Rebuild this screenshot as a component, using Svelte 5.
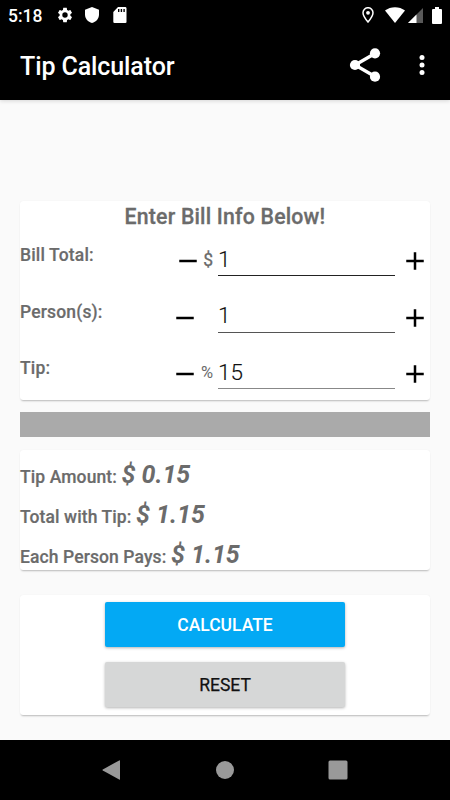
<script>
  let fields = $state([
    { key: 'bill', label: 'Bill Total:', symbol: '$', value: 1 },
    { key: 'persons', label: 'Person(s):', symbol: '', value: 1 },
    { key: 'tip', label: 'Tip:', symbol: '%', value: 15 }
  ]);

  let results = $state([
    { label: 'Tip Amount:', amount: 0.15 },
    { label: 'Total with Tip:', amount: 1.15 },
    { label: 'Each Person Pays:', amount: 1.15 }
  ]);

  function step(field, delta) {
    const min = field.key === 'persons' ? 1 : 0;
    field.value = Math.max(min, Number(field.value) + delta);
  }

  function calculate() {
    const [bill, persons, tip] = fields.map((field) => Number(field.value) || 0);
    const tipAmount = (bill * tip) / 100;
    results[0].amount = tipAmount;
    results[1].amount = bill + tipAmount;
    results[2].amount = (bill + tipAmount) / Math.max(1, persons);
  }

  function reset() {
    fields[0].value = 1;
    fields[1].value = 1;
    fields[2].value = 15;
    calculate();
  }
</script>

<div class="screen">
  <div class="status-bar">
    <span class="clock">5:18</span>
    <svg class="gear" viewBox="0 0 24 24" fill="currentColor">
      <path d="M19.14 12.94c.04-.3.06-.61.06-.94 0-.32-.02-.64-.07-.94l2.03-1.58c.18-.14.23-.41.12-.61l-1.92-3.32c-.12-.22-.37-.29-.59-.22l-2.39.96c-.5-.38-1.03-.7-1.62-.94l-.36-2.54c-.04-.24-.24-.41-.48-.41h-3.84c-.24 0-.43.17-.47.41l-.36 2.54c-.59.24-1.13.57-1.62.94l-2.39-.96c-.22-.08-.47 0-.59.22L2.74 8.87c-.12.21-.08.47.12.61l2.03 1.58c-.05.3-.09.63-.09.94s.02.64.07.94l-2.03 1.58c-.18.14-.23.41-.12.61l1.92 3.32c.12.22.37.29.59.22l2.39-.96c.5.38 1.03.7 1.62.94l.36 2.54c.05.24.24.41.48.41h3.84c.24 0 .44-.17.47-.41l.36-2.54c.59-.24 1.13-.56 1.62-.94l2.39.96c.22.08.47 0 .59-.22l1.92-3.32c.12-.22.07-.47-.12-.61l-2.01-1.58zM12 15.6A3.6 3.6 0 1 1 12 8.400a3.600 3.600 0 0 1 0 7.200z"/>
    </svg>
    <svg class="shield" viewBox="0 0 14 16" fill="currentColor">
      <path d="M7 0L0 2.700V7.500C0 11.500 3 15 7 16C11 15 14 11.500 14 7.500V2.700Z"/>
    </svg>
    <svg class="sd-card" viewBox="0 0 14 16" fill="currentColor">
      <path fill-rule="evenodd" d="M5 0H12.500A1.300 1.300 0 0 1 13.500 1.300V14.500A1.300 1.300 0 0 1 12.200 16H1.500A1.300 1.300 0 0 1 .3 14.700V5ZM5 2V5H6.400V2ZM7.700 2V5H9.100V2ZM10.400 2V5H11.800V2Z"/>
    </svg>
    <span class="spacer"></span>
    <svg class="pin" viewBox="0 0 12 16" fill="none" stroke="currentColor" stroke-width="1.500">
      <path d="M6 15C3.500 12 1 8.800 1 5.700a5 5 0 0 1 10 0C11 8.800 8.500 12 6 15Z"/>
      <circle cx="6" cy="5.800" r="1.900" fill="currentColor" stroke="none"/>
    </svg>
    <svg class="wifi" viewBox="0 0 20 16" fill="currentColor">
      <path d="M10 16L0 3.500C5.500-1 14.500-1 20 3.500Z"/>
    </svg>
    <svg class="signal" viewBox="0 0 15 15" fill="currentColor">
      <path d="M0 15L15 0V15Z" opacity="0.350"/>
      <path d="M0 15L8.500 6.500V15Z"/>
    </svg>
    <svg class="battery" viewBox="0 0 10 17" fill="currentColor">
      <path d="M3 0H7V2H9A1 1 0 0 1 10 3V16A1 1 0 0 1 9 17H1A1 1 0 0 1 0 16V3A1 1 0 0 1 1 2H3Z"/>
    </svg>
  </div>

  <header class="app-bar">
    <h1>Tip Calculator</h1>
    <button class="share" title="Share">
      <svg viewBox="0 0 32 34" fill="currentColor">
        <path d="M26 5.500L6 17L26 28.500" fill="none" stroke="currentColor" stroke-width="3.300"/>
        <circle cx="26" cy="5.300" r="5.100"/>
        <circle cx="6" cy="17" r="5.100"/>
        <circle cx="26" cy="28.700" r="5.100"/>
      </svg>
    </button>
    <button class="more" title="More options">
      <svg viewBox="0 0 6 20" fill="currentColor">
        <circle cx="3" cy="2.500" r="2.500"/>
        <circle cx="3" cy="10" r="2.500"/>
        <circle cx="3" cy="17.500" r="2.500"/>
      </svg>
    </button>
  </header>

  <main>
    <section class="card bill-card">
      <h2>Enter Bill Info Below!</h2>
      {#each fields as field (field.key)}
        <div class="field">
          <label for={field.key}>{field.label}</label>
          <div class="prefix">
            <button class="step" title="Decrease" onclick={() => step(field, -1)}>
              <svg viewBox="0 0 24 24" fill="currentColor"><path d="M19 13H5v-2h14z"/></svg>
            </button>
            <span class="symbol {field.key}">{field.symbol}</span>
          </div>
          <input id={field.key} class={field.key} inputmode="decimal" bind:value={field.value} />
          <button class="step" title="Increase" onclick={() => step(field, 1)}>
            <svg viewBox="0 0 24 24" fill="currentColor"><path d="M19 13h-6v6h-2v-6H5v-2h6V5h2v6h6z"/></svg>
          </button>
        </div>
      {/each}
    </section>

    <div class="divider"></div>

    <section class="card results">
      {#each results as result}
        <p>{result.label} <em>$ {result.amount.toFixed(2)}</em></p>
      {/each}
    </section>

    <section class="card actions">
      <button class="btn btn-primary" onclick={calculate}>CALCULATE</button>
      <button class="btn" onclick={reset}>RESET</button>
    </section>
  </main>

  <nav>
    <svg viewBox="0 0 20 20" fill="currentColor">
      <path d="M18 .8V19.200Q18 20 17.200 19.600L.8 10.600Q0 10 .8 9.400L17.200 .4Q18 0 18 .8Z"/>
    </svg>
    <svg viewBox="0 0 20 20" fill="currentColor"><circle cx="10" cy="10" r="9"/></svg>
    <svg viewBox="0 0 20 20" fill="currentColor"><rect x="0.500" y="0.500" width="19" height="19" rx="1.500"/></svg>
  </nav>
</div>

<style>
  :global(body) {
    margin: 0;
    background: #fafafa;
  }

  .screen {
    display: flex;
    flex-direction: column;
    width: 450px;
    height: 800px;
    overflow: hidden;
    background: #fafafa;
    color: #6b6b6b;
    font-family: Roboto, "Liberation Sans", sans-serif;
  }

  button {
    padding: 0;
    border: none;
    background: transparent;
    color: inherit;
    font-family: inherit;
    cursor: pointer;
  }

  svg {
    display: block;
    flex-shrink: 0;
  }

  .status-bar {
    display: flex;
    align-items: center;
    box-sizing: border-box;
    height: 30px;
    padding: 0 8px;
    background: #000;
    color: #fff;
  }

  .clock {
    width: 48px;
    font-size: 17.5px;
    font-weight: 500;
    line-height: 30px;
    margin-top: 1px;
  }

  .gear {
    width: 18px;
    height: 18px;
  }

  .shield {
    width: 14px;
    height: 16px;
    margin-left: 11px;
  }

  .sd-card {
    width: 14px;
    height: 16px;
    margin-left: 14px;
  }

  .spacer {
    flex: 1;
  }

  .pin {
    width: 12px;
    height: 16px;
    margin-right: 3px;
  }

  .wifi {
    width: 20px;
    height: 16px;
    margin-left: 8px;
  }

  .signal {
    width: 15px;
    height: 15px;
    margin-left: 3px;
  }

  .battery {
    width: 10px;
    height: 17px;
    margin-left: 9px;
  }

  .app-bar {
    display: flex;
    align-items: center;
    box-sizing: border-box;
    height: 70px;
    padding: 0 25px 0 20px;
    background: #000;
    color: #fff;
    box-shadow: 0 1px 4px rgba(0, 0, 0, 0.15);
  }

  h1 {
    flex: 1;
    margin: 2px 0 0;
    font-size: 25px;
    font-weight: 500;
    letter-spacing: -0.1px;
  }

  .share svg {
    width: 32px;
    height: 34px;
  }

  .more {
    margin-left: 38px;
  }

  .more svg {
    width: 6px;
    height: 20px;
  }

  main {
    flex: 1;
    padding: 101px 20px 0;
  }

  .card {
    box-sizing: border-box;
    background: #fff;
    border-radius: 3px;
    box-shadow: 0 2px 2px -1px rgba(0, 0, 0, 0.26), 0 0 1px rgba(0, 0, 0, 0.08);
  }

  .bill-card {
    height: 199px;
    padding-top: 3px;
  }

  h2 {
    margin: 0 0 3px;
    font-size: 21.25px;
    font-weight: 500;
    letter-spacing: 0.2px;
    line-height: 26px;
    text-align: center;
    -webkit-text-stroke: 0.3px currentColor;
  }

  .field {
    display: grid;
    grid-template-columns: 140px 53px 187px 30px;
    height: 56.5px;
  }

  label {
    padding-top: 11px;
    font-size: 17.5px;
    font-weight: 500;
    letter-spacing: 0.15px;
    line-height: 22px;
    -webkit-text-stroke: 0.2px currentColor;
  }

  .prefix {
    display: flex;
    align-items: flex-start;
    justify-content: flex-end;
  }

  .step {
    height: 30px;
    margin-top: 13px;
    color: #000;
  }

  .step svg {
    width: 30px;
    height: 30px;
  }

  .symbol {
    min-width: 10px;
    padding-top: 16px;
    font-size: 17.5px;
    line-height: 22px;
    text-align: right;
  }

  .symbol.bill {
    -webkit-text-stroke: 0.3px currentColor;
  }

  .symbol.persons,
  .symbol.tip {
    min-width: 13px;
  }

  .symbol.tip {
    font-size: 16.5px;
  }

  input {
    box-sizing: border-box;
    width: 177px;
    height: 37px;
    margin: 6px 0 0 5px;
    padding: 3px 0 0;
    border: none;
    border-bottom: 1px solid #222;
    border-radius: 0;
    outline: none;
    background: transparent;
    color: #111;
    font-family: inherit;
    font-size: 22.5px;
    font-weight: 300;
    -webkit-text-stroke: 0.15px currentColor;
  }

  input.persons {
    border-bottom-color: #555;
  }

  input.tip {
    border-bottom-color: #888;
  }

  .divider {
    height: 25px;
    margin-top: 12px;
    background: #aaa;
  }

  .results {
    height: 120px;
    margin-top: 13px;
    padding-top: 5px;
  }

  .results p {
    height: 40px;
    margin: 0;
    font-size: 17.5px;
    font-weight: 500;
    letter-spacing: 0.1px;
    line-height: 40px;
    -webkit-text-stroke: 0.2px currentColor;
  }

  em {
    font-size: 25px;
    font-weight: 700;
    letter-spacing: 0;
    -webkit-text-stroke: 0;
  }

  .actions {
    display: flex;
    flex-direction: column;
    align-items: center;
    gap: 15px;
    height: 120px;
    margin-top: 25px;
    padding-top: 7px;
  }

  .btn {
    width: 240px;
    height: 45px;
    border-radius: 2px;
    background: #d6d7d7;
    color: #111;
    font-size: 17.5px;
    font-weight: 500;
    box-shadow: 0 1px 3px rgba(0, 0, 0, 0.3);
  }

  .btn:last-child {
    font-weight: 400;
    -webkit-text-stroke: 0.25px currentColor;
  }

  .btn-primary {
    background: #03a9f4;
    color: #fff;
  }

  nav {
    display: flex;
    align-items: center;
    justify-content: space-between;
    box-sizing: border-box;
    height: 60px;
    padding: 0 102px;
    background: #000;
    color: #999;
  }

  nav svg {
    width: 20px;
    height: 20px;
  }
</style>
